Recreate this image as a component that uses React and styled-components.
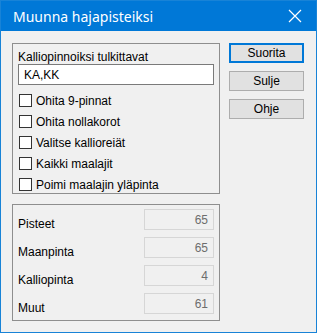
import React from "react";
import styled, { createGlobalStyle } from "styled-components";

const GlobalStyle = createGlobalStyle`
  html, body {
    margin: 0;
    padding: 0;
    background: #ffffff;
  }
  * {
    box-sizing: border-box;
  }
`;

const Window = styled.div`
  width: 317px;
  height: 333px;
  border: 1px solid #1883d7;
  background: #f0f0f0;
  display: flex;
  flex-direction: column;
  font-family: "Liberation Sans", Arial, sans-serif;
  font-size: 12px;
  color: #000;
`;

const TitleBar = styled.div`
  height: 30px;
  flex-shrink: 0;
  background: #0078d7;
  display: flex;
  align-items: center;
  justify-content: space-between;
  padding: 0 12px 0 12px;
`;

const Title = styled.span`
  color: #ffffff;
  font-family: "Noto Sans", "Open Sans", sans-serif;
  font-size: 14px;
  margin-top: 1px;
`;

const CloseIcon = styled.svg`
  width: 14px;
  height: 14px;
  margin-right: 2px;
`;

const Body = styled.div`
  display: flex;
  padding: 12px 0 0 11px;
`;

const Column = styled.div`
  display: flex;
  flex-direction: column;
  gap: 10px;
  width: 208px;
`;

const Group = styled.div`
  border: 1px solid #8e8e8e;
  height: ${(p) => p.$height}px;
  padding: ${(p) => p.$pad};
  display: flex;
  flex-direction: column;
`;

const Caption = styled.div`
  line-height: 14px;
  margin-left: 0;
`;

const TextInput = styled.div`
  width: 196px;
  height: 21px;
  background: #ffffff;
  border: 1px solid #7a7a7a;
  padding-left: 5px;
  display: flex;
  align-items: center;
  font-size: 12px;
`;

const CheckList = styled.div`
  display: flex;
  flex-direction: column;
  gap: 8px;
  margin-top: 9px;
  padding-left: 1px;
`;

const CheckRow = styled.label`
  display: flex;
  align-items: center;
  gap: 4px;
  height: 13px;
`;

const Box = styled.span`
  width: 13px;
  height: 13px;
  border: 1px solid #333333;
  background: #ffffff;
  flex-shrink: 0;
`;

const Stats = styled.div`
  display: flex;
  flex-direction: column;
  gap: 7px;
`;

const StatRow = styled.div`
  display: flex;
  align-items: center;
  justify-content: space-between;
  height: 21px;
`;

const StatLabel = styled.span`
  margin-top: 8px;
`;

const StatField = styled.div`
  width: 70px;
  height: 21px;
  border: 1px solid #d6d6d6;
  background: #f0f0f0;
  color: #6d6d6d;
  display: flex;
  align-items: center;
  justify-content: flex-end;
  padding-right: 5px;
`;

const Buttons = styled.div`
  display: flex;
  flex-direction: column;
  gap: 8px;
  margin-left: 9px;
`;

const Button = styled.button`
  width: 75px;
  height: 20px;
  padding: 0;
  font-family: "Liberation Sans", Arial, sans-serif;
  font-size: 12px;
  color: #000;
  background: #e1e1e1;
  border: ${(p) => (p.$default ? "2px solid #0078d7" : "1px solid #adadad")};
`;

const checks = [
  "Ohita 9-pinnat",
  "Ohita nollakorot",
  "Valitse kallioreiät",
  "Kaikki maalajit",
  "Poimi maalajin yläpinta",
];

const stats = [
  { label: "Pisteet", value: 65 },
  { label: "Maanpinta", value: 65 },
  { label: "Kalliopinta", value: 4 },
  { label: "Muut", value: 61 },
];

export default function App() {
  return (
    <>
      <GlobalStyle />
      <Window>
        <TitleBar>
          <Title>Muunna hajapisteiksi</Title>
          <CloseIcon viewBox="0 0 14 14">
            <path d="M1 1 L13 13 M13 1 L1 13" stroke="#ffffff" strokeWidth="1.2" />
          </CloseIcon>
        </TitleBar>
        <Body>
          <Column>
            <Group $height={151} $pad="6px 5px 0 5px">
              <Caption>Kalliopinnoiksi tulkittavat</Caption>
              <TextInput>KA,KK</TextInput>
              <CheckList>
                {checks.map((c) => (
                  <CheckRow key={c}>
                    <Box />
                    {c}
                  </CheckRow>
                ))}
              </CheckList>
            </Group>
            <Group $height={117} $pad="4px 5px 0 5px">
              <Stats>
                {stats.map((s) => (
                  <StatRow key={s.label}>
                    <StatLabel>{s.label}</StatLabel>
                    <StatField>{s.value}</StatField>
                  </StatRow>
                ))}
              </Stats>
            </Group>
          </Column>
          <Buttons>
            <Button $default>Suorita</Button>
            <Button>Sulje</Button>
            <Button>Ohje</Button>
          </Buttons>
        </Body>
      </Window>
    </>
  );
}
